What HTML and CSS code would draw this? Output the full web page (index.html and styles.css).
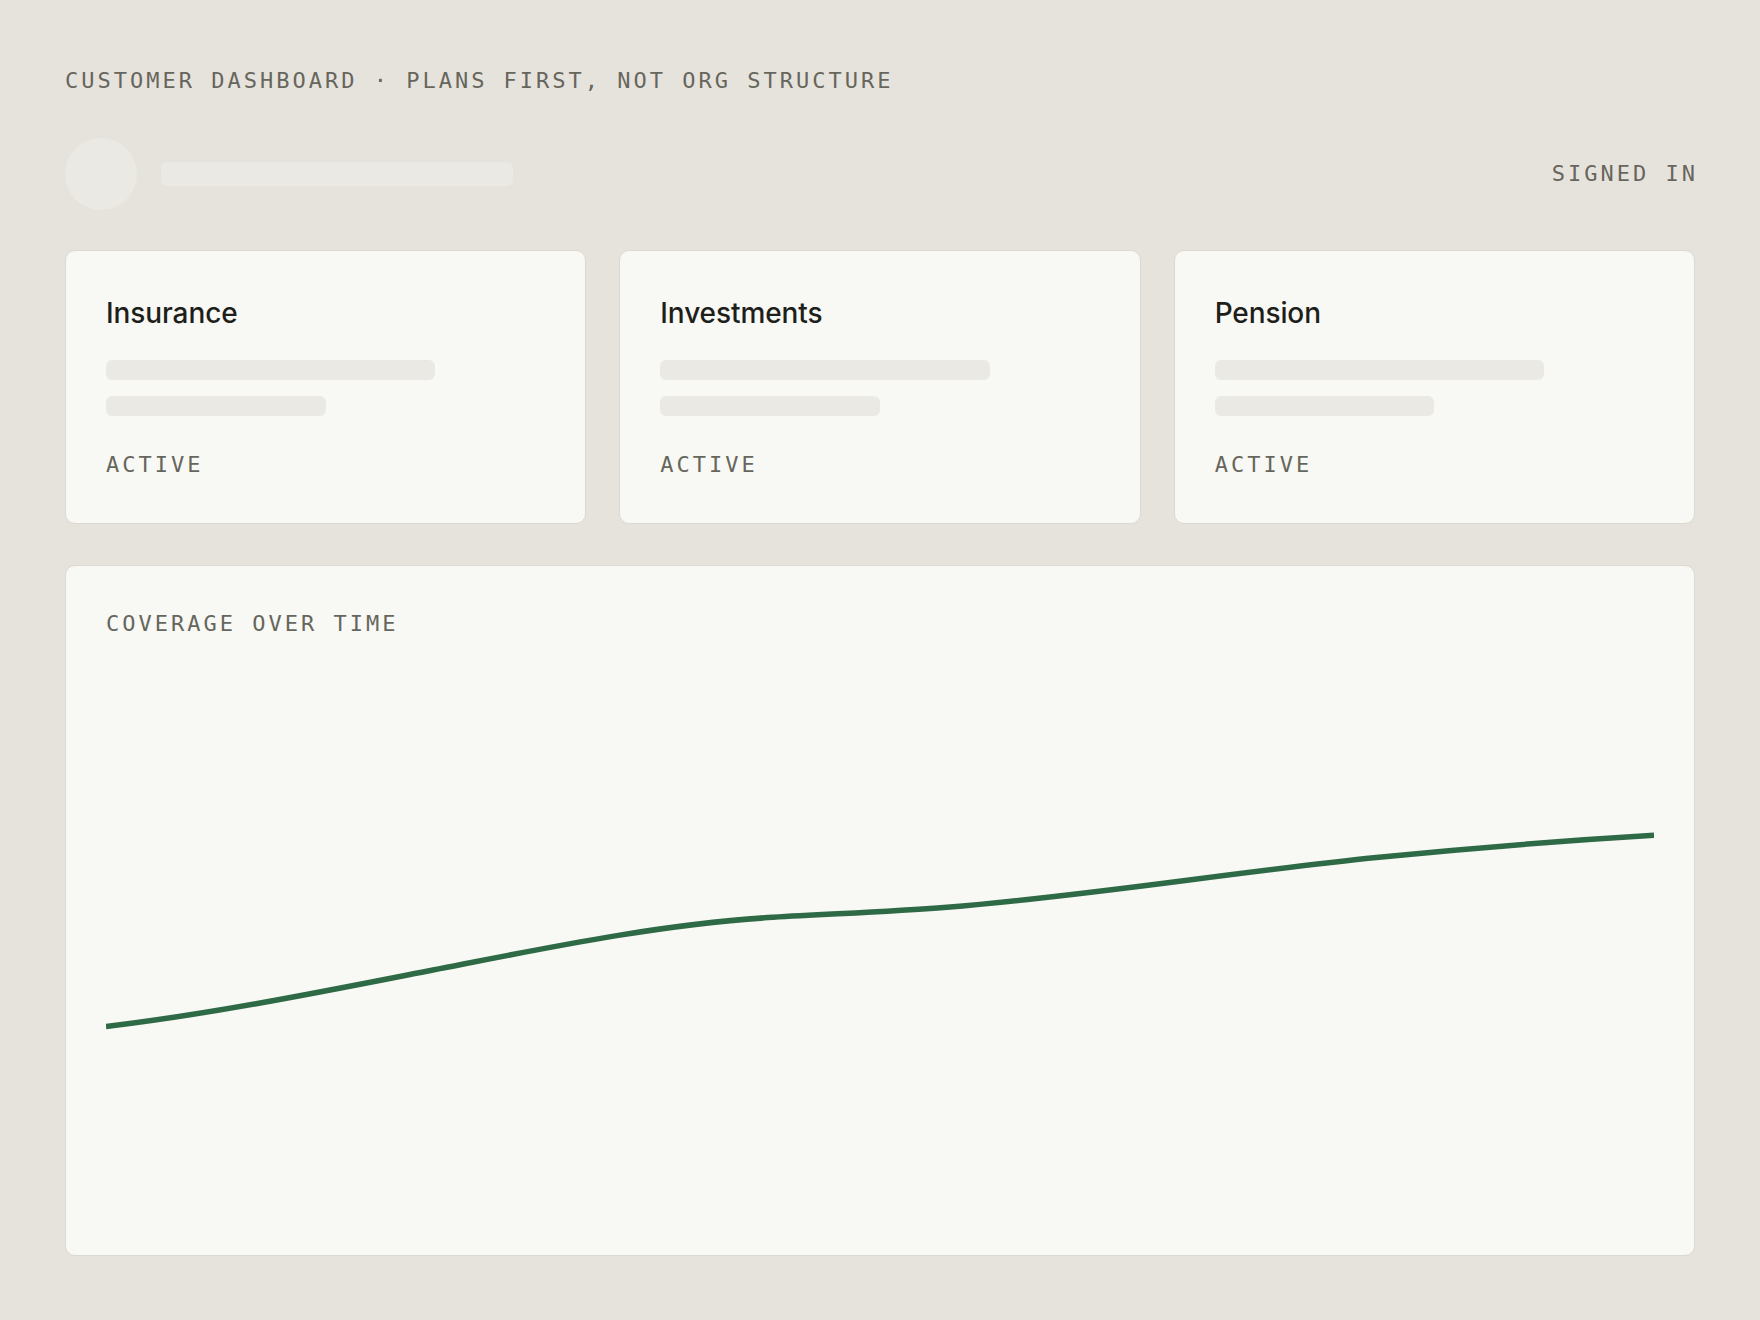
FILE: index.html
```html
<!DOCTYPE html>
<html lang="en">
<head>
<meta charset="utf-8">
<title>Customer dashboard</title>
<link rel="stylesheet" href="styles.css">
</head>
<body>
<main class="page">
  <div class="eyebrow">CUSTOMER DASHBOARD · PLANS FIRST, NOT ORG STRUCTURE</div>
  <header class="header">
    <div class="who">
      <div class="avatar"></div>
      <div class="name-skeleton"></div>
    </div>
    <div class="mono status">SIGNED IN</div>
  </header>
  <section class="plans">
    <article class="card">
      <h2 class="card-title">Insurance</h2>
      <div class="skel skel-long"></div>
      <div class="skel skel-short"></div>
      <div class="mono card-status">ACTIVE</div>
    </article>
    <article class="card">
      <h2 class="card-title">Investments</h2>
      <div class="skel skel-long"></div>
      <div class="skel skel-short"></div>
      <div class="mono card-status">ACTIVE</div>
    </article>
    <article class="card">
      <h2 class="card-title">Pension</h2>
      <div class="skel skel-long"></div>
      <div class="skel skel-short"></div>
      <div class="mono card-status">ACTIVE</div>
    </article>
  </section>
  <section class="chart-card">
    <div class="mono chart-label">COVERAGE OVER TIME</div>
    <svg class="chart" viewBox="0 0 1548 572" preserveAspectRatio="none">
      <path class="chart-line" d="M0 389.5 C109 376.4 218 354.3 327 333 C440.3 310.9 553.7 287.1 667 280.3 C725 276.8 783 274.9 841 270.3 C985 258.8 1129 234.7 1273 220.3 C1364.7 211.1 1456.3 203.8 1548 198.3"/>
    </svg>
  </section>
</main>
</body>
</html>
```
FILE: styles.css
```css
* { box-sizing: border-box; }
html, body { margin: 0; padding: 0; }
body {
  background: #e6e3dc;
  font-family: Inter, "Noto Sans", "Liberation Sans", sans-serif;
  color: #1e1f1b;
}
.page {
  padding: 68px 65px 65px;
}
.mono, .eyebrow {
  font-family: "DejaVu Sans Mono", "Liberation Mono", monospace;
  font-size: 22px;
  line-height: 26px;
  letter-spacing: 3px;
  color: #66665d;
}
.eyebrow {
  margin-bottom: 44px;
}
.header {
  display: flex;
  align-items: center;
  justify-content: space-between;
  height: 72px;
  margin-bottom: 40px;
}
.who {
  display: flex;
  align-items: center;
  gap: 24px;
}
.avatar {
  width: 72px;
  height: 72px;
  border-radius: 50%;
  background: #ebe9e4;
}
.name-skeleton {
  width: 352px;
  height: 24px;
  border-radius: 6px;
  background: #ebe9e4;
}
.status { margin-right: -3px; }
.plans {
  display: grid;
  grid-template-columns: repeat(3, 1fr);
  gap: 33px;
  margin-bottom: 41px;
}
.card {
  background: #f8f8f4;
  border: 1px solid #dcd9d2;
  border-radius: 10px;
  padding: 45px 40px 45px;
}
.card-title {
  margin: 0 0 30px;
  font-size: 28px;
  line-height: 34px;
  font-weight: 500;
  letter-spacing: -0.1px;
  color: #1e1f1b;
}
.skel {
  height: 20px;
  border-radius: 6px;
  background: #ebe9e4;
}
.skel-long { width: 75%; margin-bottom: 16px; }
.skel-short { width: 50%; }
.card-status { margin-top: 36px; }
.chart-card {
  background: #f8f8f4;
  border: 1px solid #dcd9d2;
  border-radius: 10px;
  padding: 45px 40px 46px;
}
.chart {
  display: block;
  width: 100%;
  height: 572px;
}
.chart-line {
  fill: none;
  stroke: #2e6a45;
  stroke-width: 5.5;
  stroke-linecap: butt;
}
```
